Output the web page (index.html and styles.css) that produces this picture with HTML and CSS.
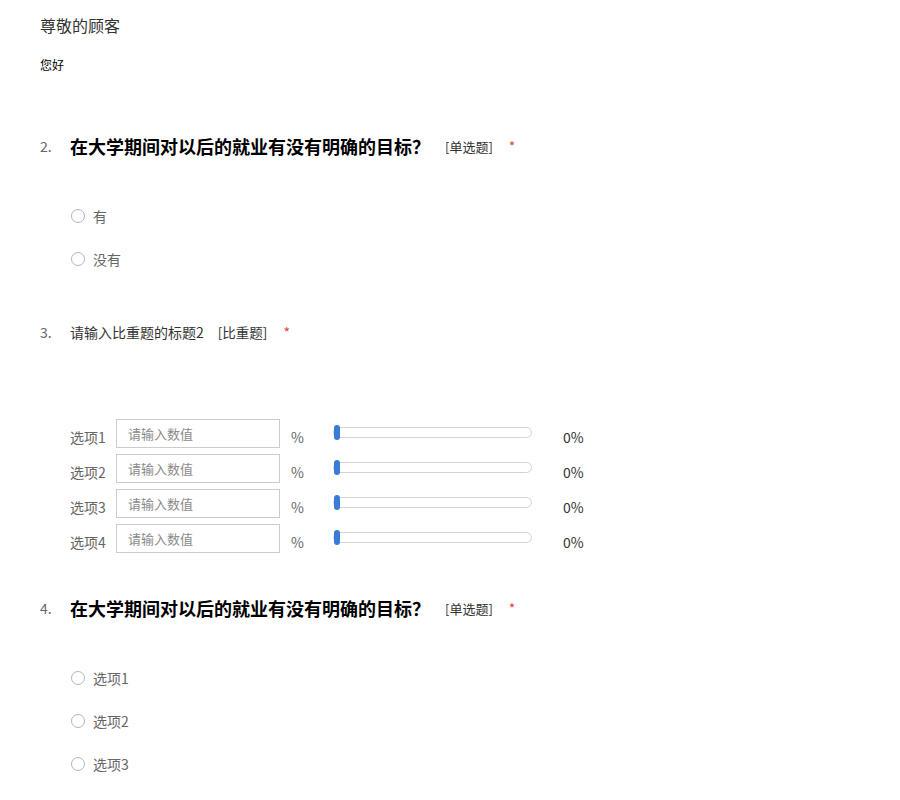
FILE: index.html
```html
<!DOCTYPE html>
<html>
<head>
<meta charset="utf-8">
<link rel="stylesheet" href="styles.css">
</head>
<body>
<div class="page">
  <div class="greet">尊敬的顾客</div>
  <div class="hello">您好</div>

  <div class="q q2">
    <div class="qhead">
      <span class="qnum">2.</span>
      <span class="qtitle big">在大学期间对以后的就业有没有明确的目标？</span>
      <span class="qtype">[单选题]</span>
      <span class="req">*</span>
    </div>
    <div class="options">
      <label class="opt"><span class="radio"></span><span class="otext">有</span></label>
      <label class="opt"><span class="radio"></span><span class="otext">没有</span></label>
    </div>
  </div>

  <div class="q q3">
    <div class="qhead">
      <span class="qnum">3.</span>
      <span class="qtitle small">请输入比重题的标题2</span>
      <span class="qtype">[比重题]</span>
      <span class="req">*</span>
    </div>
    <div class="rows">
      <div class="row"><span class="rlabel">选项1</span><input class="rinput" placeholder="请输入数值"><span class="pct">%</span><span class="track"><span class="thumb"></span></span><span class="val">0%</span></div>
      <div class="row"><span class="rlabel">选项2</span><input class="rinput" placeholder="请输入数值"><span class="pct">%</span><span class="track"><span class="thumb"></span></span><span class="val">0%</span></div>
      <div class="row"><span class="rlabel">选项3</span><input class="rinput" placeholder="请输入数值"><span class="pct">%</span><span class="track"><span class="thumb"></span></span><span class="val">0%</span></div>
      <div class="row"><span class="rlabel">选项4</span><input class="rinput" placeholder="请输入数值"><span class="pct">%</span><span class="track"><span class="thumb"></span></span><span class="val">0%</span></div>
    </div>
  </div>

  <div class="q q4">
    <div class="qhead">
      <span class="qnum">4.</span>
      <span class="qtitle big">在大学期间对以后的就业有没有明确的目标？</span>
      <span class="qtype">[单选题]</span>
      <span class="req">*</span>
    </div>
    <div class="options">
      <label class="opt"><span class="radio"></span><span class="otext">选项1</span></label>
      <label class="opt"><span class="radio"></span><span class="otext">选项2</span></label>
      <label class="opt"><span class="radio"></span><span class="otext">选项3</span></label>
      <label class="opt"><span class="radio"></span><span class="otext">选项4</span></label>
    </div>
  </div>
</div>
</body>
</html>
```

FILE: styles.css
```css
html, body {
  margin: 0;
  padding: 0;
  background: #fff;
}
body {
  font-family: "Microsoft YaHei", "Noto Sans CJK SC", "Noto Sans", sans-serif;
  color: #333;
  overflow: hidden;
  height: 800px;
}
.page {
  padding-left: 40px;
}
.greet {
  font-size: 16px;
  line-height: 20px;
  padding-top: 15px;
  color: #333;
}
.hello {
  font-size: 12px;
  line-height: 16px;
  margin-top: 22px;
  color: #000;
}
.qhead {
  display: flex;
  align-items: center;
  height: 24px;
}
.q2 { margin-top: 61px; }
.q3 { margin-top: 51px; }
.q4 { margin-top: 43px; }
.qnum {
  width: 30px;
  font-size: 14px;
  color: #666;
}
.qtitle.big {
  font-size: 18px;
  font-weight: bold;
  color: #000;
}
.qtitle.small {
  font-size: 14px;
  color: #333;
}
.qtype {
  font-size: 13px;
  color: #333;
  margin-left: 15px;
}
.q3 .qtype { margin-left: 14px; font-size: 13.5px; }
.req {
  color: #e3463b;
  font-size: 14px;
  margin-left: 16px;
}
.options {
  margin-top: 48px;
  padding-left: 30px;
  display: flex;
  flex-direction: column;
  gap: 23px;
}
.opt {
  display: flex;
  align-items: center;
  height: 20px;
}
.radio {
  width: 14px;
  height: 14px;
  box-sizing: border-box;
  border: 1px solid #b5b5b5;
  border-radius: 50%;
  margin-left: 1px;
}
.otext {
  margin-left: 8px;
  font-size: 14px;
  color: #666;
}
.rows {
  margin-top: 75px;
  padding-left: 30px;
  display: flex;
  flex-direction: column;
  gap: 6px;
}
.row {
  display: flex;
  align-items: flex-end;
  height: 29px;
}
.rlabel {
  width: 46px;
  font-size: 14px;
  line-height: 20px;
  color: #666;
  margin-bottom: 1px;
}
.rinput {
  width: 164px;
  height: 29px;
  box-sizing: border-box;
  border: 1px solid #ccc;
  padding: 0 0 0 11px;
  margin: 0;
  font-family: inherit;
  font-size: 13px;
  outline: none;
}
.rinput::placeholder {
  color: #8a8a8a;
}
.pct {
  margin-left: 11px;
  width: 12px;
  font-size: 14px;
  line-height: 20px;
  color: #666;
  margin-bottom: 1px;
}
.track {
  position: relative;
  margin-left: 30px;
  width: 199px;
  height: 11px;
  box-sizing: border-box;
  border: 1px solid #d4d4d4;
  border-radius: 6px;
  align-self: center;
  margin-top: -3px;
}
.thumb {
  position: absolute;
  left: 0;
  top: -3px;
  width: 6px;
  height: 15px;
  border-radius: 3px;
  background: #3a7bd5;
}
.val {
  margin-left: 31px;
  font-size: 14px;
  line-height: 20px;
  color: #333;
  margin-bottom: 1px;
}
```
